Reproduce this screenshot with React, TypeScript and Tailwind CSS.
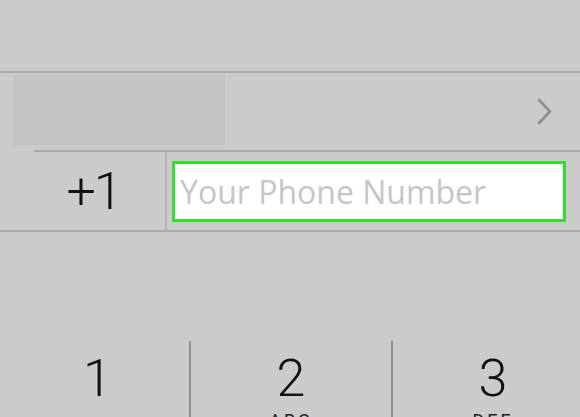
import { FC } from 'react';

const keys = [
  { num: '1', sub: '' },
  { num: '2', sub: 'ABC' },
  { num: '3', sub: 'DEF' },
];

const App: FC = () => {
  return (
    <div className="w-[580px] h-[417px] overflow-hidden bg-[#cbcbcb] flex flex-col font-['Roboto',sans-serif]">
      {/* top bar area */}
      <div className="h-[71px] shrink-0" />
      <div className="h-[2px] shrink-0 bg-[#aaaaaa]" />

      {/* country row */}
      <div className="h-[77px] shrink-0 flex items-start">
        <div className="ml-[13px] mt-[2px] w-[212px] h-[70px] bg-[#c3c3c3]" />
        <div className="flex-1 flex justify-end pr-[27px] pt-[25px]">
          <svg width="17" height="27" viewBox="0 0 17 27" fill="none">
            <polyline points="3,2 14,13.5 3,25" stroke="#8f8f8f" strokeWidth="2.8" strokeLinecap="round" strokeLinejoin="round" />
          </svg>
        </div>
      </div>
      <div className="ml-[34px] h-[2px] shrink-0 bg-[#aaaaaa]" />

      {/* phone row */}
      <div className="h-[78px] shrink-0 flex">
        <div className="w-[165px] flex items-center justify-center pl-[22px] pt-[2px]">
          <span className="text-[52px] leading-none font-light tracking-[-2px] text-[#111]">+1</span>
        </div>
        <div className="w-[2px] bg-[#b0b0b0]" />
        <div className="pl-[5px] pt-[9px]">
          <div className="w-[394px] h-[61px] bg-white border-[3px] border-[#2fe02f] flex items-center pl-[5px]">
            <span className="font-['Open_Sans',sans-serif] text-[32px] leading-none text-[#c6c6c6]">
              Your Phone Number
            </span>
          </div>
        </div>
      </div>
      <div className="h-[2px] shrink-0 bg-[#aaaaaa]" />

      {/* keypad */}
      <div className="h-[109px] shrink-0" />
      <div className="flex flex-1">
        {keys.map((k, i) => (
          <div
            key={k.num}
            className={
              i === 0
                ? 'w-[189px] shrink-0 flex flex-col items-center pt-[12px] pl-[6px]'
                : 'w-[202px] shrink-0 flex flex-col items-center pt-[12px] border-l-2 border-[#8f8f8f]'
            }
          >
            <span className="text-[52px] leading-none font-light text-[#111]">{k.num}</span>
            <span className="mt-[7px] text-[18px] leading-none tracking-[3px] text-[#222]">{k.sub}</span>
          </div>
        ))}
      </div>
    </div>
  );
};

export default App;
